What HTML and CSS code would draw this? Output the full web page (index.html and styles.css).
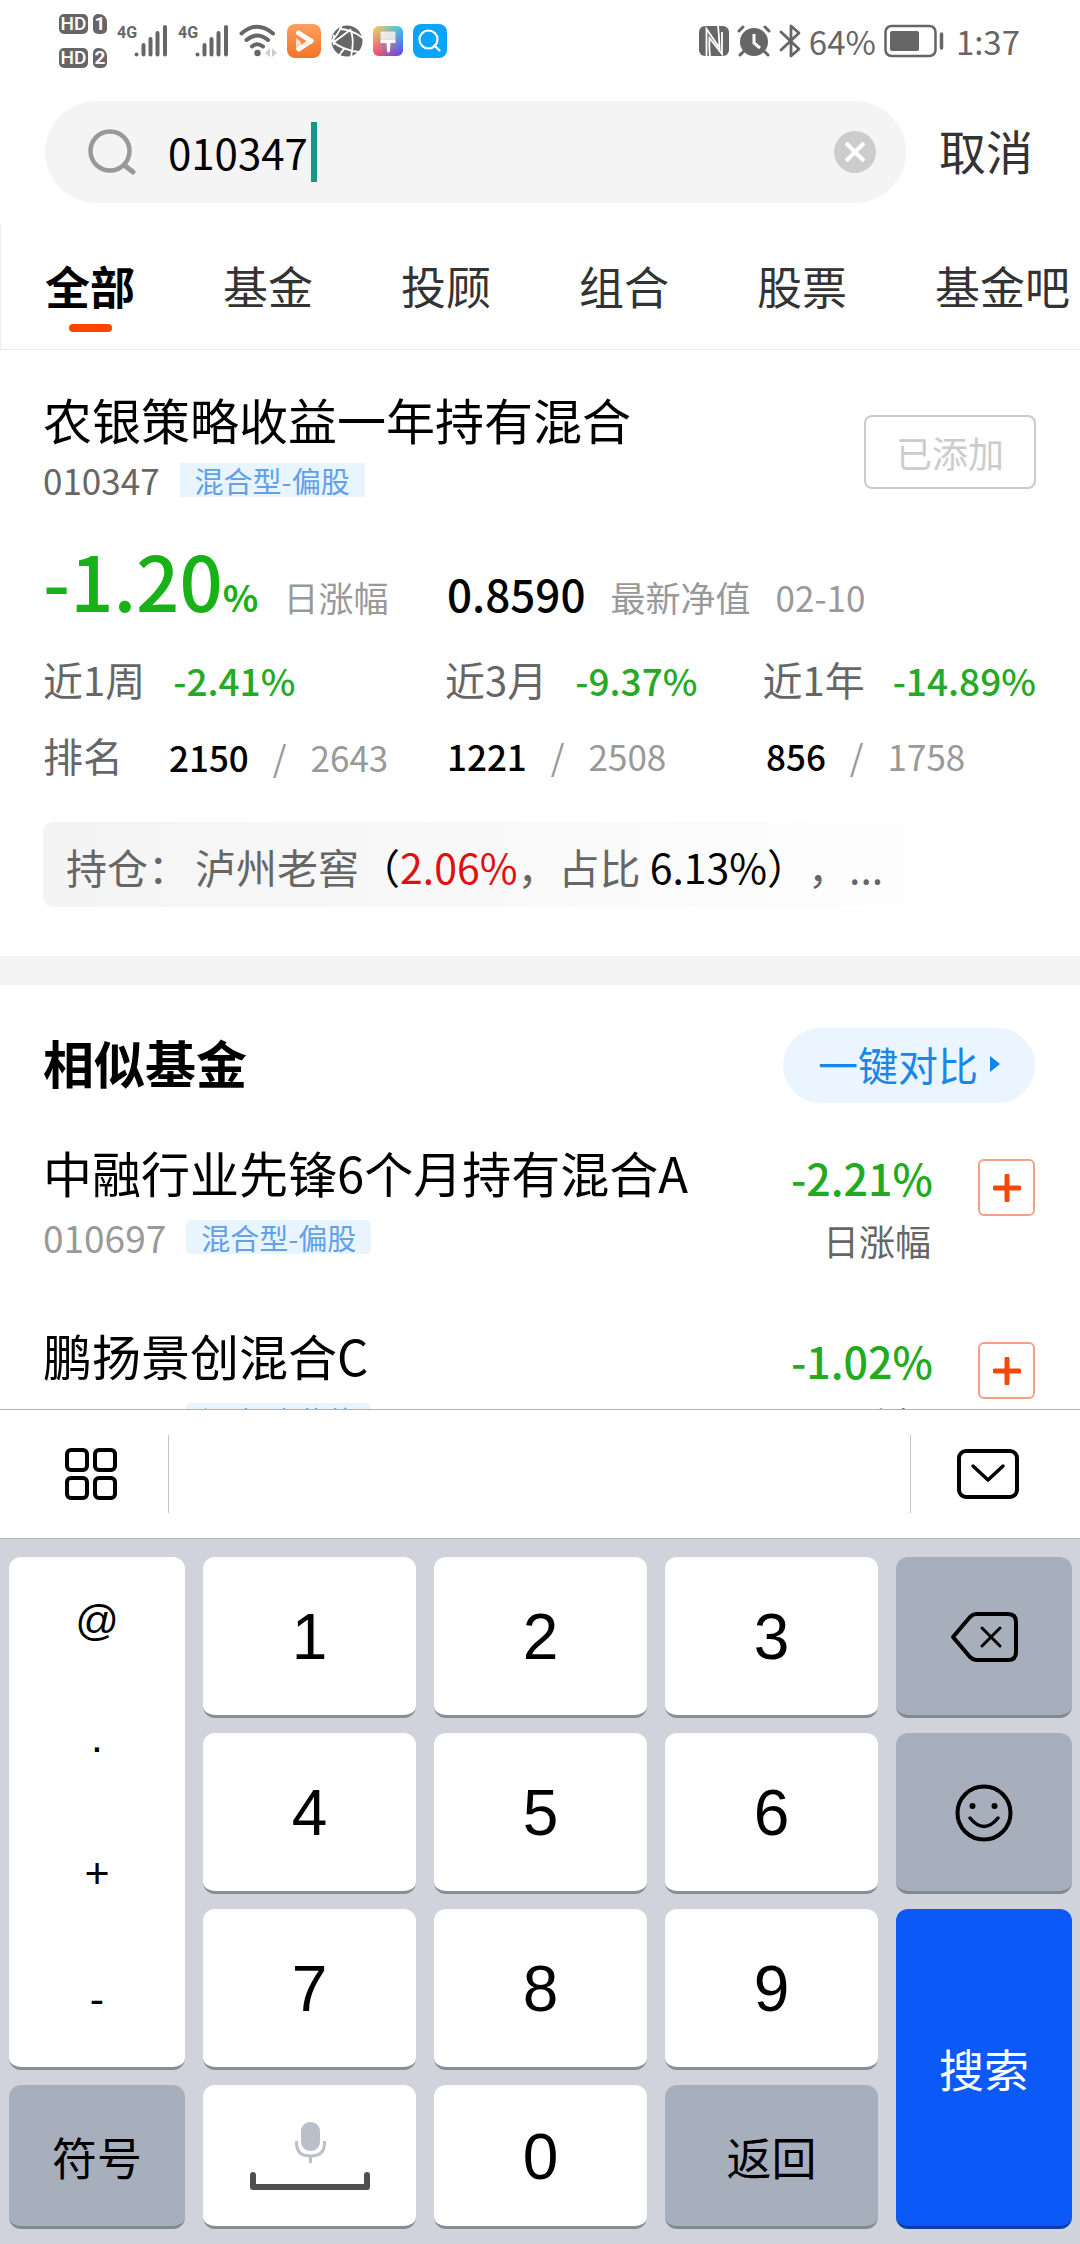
FILE: index.html
```html
<!DOCTYPE html>
<html lang="zh-CN">
<head>
<meta charset="utf-8">
<meta name="viewport" content="width=device-width, initial-scale=1">
<title>基金搜索</title>
<link rel="stylesheet" href="styles.css">
</head>
<body>
<div class="app">
  <header class="status">
    <div class="status-group">
      <div class="hd-stack">
        <span class="hd-row"><span class="hd">HD</span><span class="sim">1</span></span>
        <span class="hd-row"><span class="hd">HD</span><span class="sim">2</span></span>
      </div>
      <div class="signal">
        <span class="net">4G</span>
        <svg class="bars" viewBox="0 0 34 32" aria-hidden="true"><path d="M2.500 29.500v0M9.500 20v9.500M16.500 14v15.500M23.500 8v21.500M31 2v27.500"/></svg>
      </div>
      <div class="signal">
        <span class="net">4G</span>
        <svg class="bars" viewBox="0 0 34 32" aria-hidden="true"><path d="M2.500 29.500v0M9.500 20v9.500M16.500 14v15.500M23.500 8v21.500M31 2v27.500"/></svg>
      </div>
      <svg class="wifi" viewBox="0 0 38 34" aria-hidden="true">
        <g fill="none" stroke="#666" stroke-width="4" stroke-linecap="round"><path d="M2.500 9.500Q18 -4 34 9.500"/><path d="M7.500 16Q18 7 29 16"/><path d="M13 22.500Q18 18 24 22.500"/></g>
        <circle cx="18.500" cy="29" r="3.200" fill="#666"/><path d="M31 24v9l-5-4zM33 24v9l5-4z" fill="#ccc"/>
      </svg>
      <svg class="app-icon" viewBox="0 0 34 34" aria-hidden="true">
        <defs><linearGradient id="og" x2="0" y2="1"><stop stop-color="#fca05f"/><stop offset="1" stop-color="#f47427"/></linearGradient></defs>
        <rect width="34" height="34" rx="8" fill="url(#og)"/><path d="M11.500 9L24 17" fill="none" stroke="#fff" stroke-width="5" stroke-linecap="round"/><path d="M24 17L12 25" fill="none" stroke="#fff" stroke-width="5" stroke-linecap="round" opacity=".9"/><path d="M9 13.500v10q0 4 4 3.500l1-9z" fill="#fff" opacity=".7"/>
      </svg>
      <svg class="globe" viewBox="0 0 32 32" aria-hidden="true">
        <circle cx="16" cy="16" r="15.500" fill="#666"/><g fill="none" stroke="#fff" stroke-width="1.800"><path d="M11 0Q8 8 0 17M1 16Q11 25 28 27M8 4Q20 4 32 13M19 4Q24 14 20 32M19 5Q10 12 3 17M3 10Q2 14 3 20M14 23Q10 27 8 31"/></g>
      </svg>
      <svg class="paint" viewBox="0 0 30 30" aria-hidden="true">
        <defs><linearGradient id="pg" x2="1" y2="0"><stop stop-color="#ffd34d"/><stop offset="1" stop-color="#33c9f5"/></linearGradient><linearGradient id="ph" x2="1" y2="0"><stop stop-color="#ff4a6e"/><stop offset="1" stop-color="#5b46f2"/></linearGradient><linearGradient id="pm" x2="0" y2="1"><stop stop-color="#fff" stop-opacity="0"/><stop offset="1" stop-color="#fff"/></linearGradient><mask id="mk"><rect width="30" height="30" fill="url(#pm)"/></mask></defs>
        <rect width="30" height="30" rx="6" fill="url(#pg)"/><rect width="30" height="30" rx="6" fill="url(#ph)" mask="url(#mk)"/><path d="M7.500 5.500h15v8h-15z" fill="#fff" opacity=".75"/><path d="M7.500 13.500h15V17h-5l-.5 8q-1.500 3-3 0l-.5-8h-6z" fill="#fff"/>
      </svg>
      <svg class="app-icon" viewBox="0 0 34 34" aria-hidden="true">
        <rect width="34" height="34" rx="8" fill="#0aa5fb"/><circle cx="15.500" cy="15.500" r="9" fill="none" stroke="#fff" stroke-width="2.200"/><path d="M21.500 21.500l5 5" stroke="#fff" stroke-width="2.200" stroke-linecap="round"/>
      </svg>
    </div>
    <div class="status-group status-right">
      <svg class="nfc" viewBox="0 0 30 30" aria-hidden="true"><rect width="30" height="30" rx="6" fill="#666"/><path d="M7.500 30V3l13 19Q20 8 19 0M11 30Q10 22 10.500 12L23 28V6" fill="none" stroke="#fff" stroke-width="1.800"/></svg>
      <svg class="alarm" viewBox="0 0 34 32" aria-hidden="true"><circle cx="17" cy="17" r="14" fill="#666"/><path d="M2 6l4-4M32 6l-4-4M6 27l-3 3M28 27l3 3" stroke="#666" stroke-width="3" stroke-linecap="round"/><path d="M17 9v9l6 5" fill="none" stroke="#fff" stroke-width="3"/></svg>
      <svg class="bt" viewBox="0 0 22 34" aria-hidden="true"><path d="M2 8l18 17-8 7V2l8 7L2 26" fill="none" stroke="#666" stroke-width="2.800" stroke-linejoin="round" stroke-linecap="round"/></svg>
      <span class="battery-text">64%</span>
      <svg class="battery" viewBox="0 0 60 34" aria-hidden="true"><rect x="1.500" y="2" width="50" height="30" rx="6" fill="none" stroke="#666" stroke-width="2.500"/><rect x="6" y="7" width="29" height="20" rx="2" fill="#666"/><path d="M57.500 10v14" stroke="#666" stroke-width="3.500" stroke-linecap="round"/></svg>
      <time class="clock">1:37</time>
    </div>
  </header>

  <form class="search" onsubmit="return false">
    <div class="search-box">
      <svg class="search-icon" viewBox="0 0 50 46" aria-hidden="true"><circle cx="22" cy="22" r="19.500" fill="none" stroke="#999" stroke-width="4.500"/><path d="M36 36l9 7" stroke="#999" stroke-width="5" stroke-linecap="round"/></svg>
      <input class="search-input" type="text" aria-label="搜索基金" value="010347"><span class="caret"></span>
      <button class="clear" type="button" aria-label="清除"><svg viewBox="0 0 42 42"><circle cx="21" cy="21" r="21" fill="#ccc"/><path d="M12 12l18 18M30 12L12 30" stroke="#fff" stroke-width="4"/></svg></button>
    </div>
    <button class="cancel" type="button">取消</button>
  </form>

  <nav class="tabs">
    <a class="tab active" href="#all">全部</a>
    <a class="tab" href="#fund">基金</a>
    <a class="tab" href="#adviser">投顾</a>
    <a class="tab" href="#group">组合</a>
    <a class="tab" href="#stock">股票</a>
    <a class="tab" href="#bar">基金吧</a>
  </nav>

  <main class="content">
    <article class="fund">
      <div class="fund-head">
        <div>
          <h1 class="name">农银策略收益一年持有混合</h1>
          <div class="meta"><span class="code">010347</span><span class="tag">混合型-偏股</span></div>
        </div>
        <button class="added" type="button">已添加</button>
      </div>
      <div class="stats quote">
        <div class="pair"><span class="big">-1.20<span class="unit">%</span></span><span class="hint">日涨幅</span></div>
        <div class="pair nav-value"><span class="nav-num">0.8590</span><span class="hint">最新净值</span><span class="hint">02-10</span></div>
      </div>
      <div class="stats">
        <div class="pair"><span class="label">近1周</span><span class="down">-2.41%</span></div>
        <div class="pair"><span class="label">近3月</span><span class="down">-9.37%</span></div>
        <div class="pair"><span class="label">近1年</span><span class="down">-14.89%</span></div>
      </div>
      <div class="stats">
        <div class="rank"><span class="label rank-label">排名</span><span>2150</span><span class="of">/</span><span class="of">2643</span></div>
        <div class="rank"><span>1221</span><span class="of">/</span><span class="of">2508</span></div>
        <div class="rank"><span>856</span><span class="of">/</span><span class="of">1758</span></div>
      </div>
      <p class="holding"><span class="holding-label">持仓：</span>泸州老窖<span class="dark">（</span><span class="up">2.06%</span>，占比 <span class="dark">6.13%）</span>，...</p>
    </article>

    <section class="similar">
      <div class="similar-head">
        <h2 class="heading">相似基金</h2>
        <a class="compare" href="#compare">一键对比<svg viewBox="0 0 10 16" aria-hidden="true"><path d="M0 0l10 8-10 8z" fill="#0f86f0"/></svg></a>
      </div>
      <div class="item">
        <div class="item-main">
          <h3 class="name">中融行业先锋6个月持有混合A</h3>
          <div class="meta"><span class="code light">010697</span><span class="tag round">混合型-偏股</span></div>
        </div>
        <div class="change"><span class="pct">-2.21%</span><span class="day">日涨幅</span></div>
        <button class="add" type="button" aria-label="添加"><svg viewBox="0 0 28 28"><path d="M14 2v24M2 14h24" stroke="#f4470b" stroke-width="5" stroke-linecap="round"/></svg></button>
      </div>
      <div class="item">
        <div class="item-main">
          <h3 class="name">鹏扬景创混合C</h3>
          <div class="meta"><span class="code light">010444</span><span class="tag round">混合型-偏债</span></div>
        </div>
        <div class="change"><span class="pct">-1.02%</span><span class="day">日涨幅</span></div>
        <button class="add" type="button" aria-label="添加"><svg viewBox="0 0 28 28"><path d="M14 2v24M2 14h24" stroke="#f4470b" stroke-width="5" stroke-linecap="round"/></svg></button>
      </div>
    </section>
  </main>

  <section class="keyboard" aria-label="键盘">
    <div class="toolbar">
      <button class="tool tool-left" type="button" aria-label="菜单"><svg width="52" height="52" viewBox="0 0 52 52"><g fill="none" stroke="#000" stroke-width="4"><rect x="2" y="2" width="20" height="20" rx="4"/><rect x="30" y="2" width="20" height="20" rx="4"/><rect x="2" y="30" width="20" height="20" rx="4"/><rect x="30" y="30" width="20" height="20" rx="4"/></g></svg></button>
      <button class="tool tool-right" type="button" aria-label="收起键盘"><svg width="62" height="50" viewBox="0 0 62 50"><rect x="2" y="2" width="58" height="46" rx="7" fill="none" stroke="#000" stroke-width="4"/><path d="M16 17l15 14 15-14" fill="none" stroke="#000" stroke-width="3.500" stroke-linecap="round" stroke-linejoin="round"/></svg></button>
    </div>
    <div class="keys">
      <div class="key symbols"><button type="button">@</button><button type="button">·</button><button type="button">+</button><button type="button">-</button></div>
      <button class="key" type="button">1</button>
      <button class="key" type="button">2</button>
      <button class="key" type="button">3</button>
      <button class="key gray" type="button" aria-label="删除"><svg width="68" height="50" viewBox="0 0 68 50"><path d="M3 25L20 5q3-3 6-3h32q8 0 8 8v30q0 8-8 8H26q-3 0-6-3z" fill="none" stroke="#000" stroke-width="4" stroke-linejoin="round"/><path d="M32 16l18 18M50 16L32 34" stroke="#000" stroke-width="3" stroke-linecap="round"/></svg></button>
      <button class="key" type="button">4</button>
      <button class="key" type="button">5</button>
      <button class="key" type="button">6</button>
      <button class="key gray" type="button" aria-label="表情"><svg width="58" height="58" viewBox="0 0 58 58"><circle cx="29" cy="29" r="26.500" fill="none" stroke="#000" stroke-width="4"/><circle cx="17.500" cy="22" r="3" /><circle cx="39.500" cy="22" r="3"/><path d="M15 34q14 17 28 0" fill="none" stroke="#000" stroke-width="3.500" stroke-linecap="round"/></svg></button>
      <button class="key" type="button">7</button>
      <button class="key" type="button">8</button>
      <button class="key" type="button">9</button>
      <button class="key go" type="button">搜索</button>
      <button class="key gray word" type="button">符号</button>
      <button class="key" type="button" aria-label="空格"><svg width="120" height="70" viewBox="0 0 120 70"><rect x="51" y="0" width="19" height="29" rx="9" fill="#bac0c9"/><path d="M46.500 19v2q0 13 14 13t14-13v-2M60.500 34v7" fill="none" stroke="#bac0c9" stroke-width="3"/><path d="M3 53v12h114V53" fill="none" stroke="#505050" stroke-width="6" stroke-linecap="round" stroke-linejoin="round"/></svg></button>
      <button class="key" type="button">0</button>
      <button class="key gray word" type="button">返回</button>
    </div>
  </section>
</div>
</body>
</html>
```

FILE: styles.css
```css
* { box-sizing: border-box; }

body {
  margin: 0;
  background: #fff;
  color: #000;
  font-family: "Noto Sans CJK SC", sans-serif;
}

button, input {
  padding: 0;
  border: 0;
  background: none;
  color: inherit;
  font: inherit;
}

a { color: inherit; text-decoration: none; }
h1, h2, h3, p { margin: 0; font-weight: 400; }
svg { display: block; flex: none; }

.app {
  display: flex;
  flex-direction: column;
  height: 100vh;
}

/* Status bar */
.status {
  display: flex;
  flex: none;
  justify-content: space-between;
  height: 82px;
  padding: 0 60px 0 59px;
  color: #666;
}
.status-group { display: flex; align-items: center; gap: 10px; }
.status-right { gap: 8px; }
.hd-stack { display: flex; flex-direction: column; gap: 14px; }
.hd-row { display: flex; gap: 5px; }
.hd, .sim {
  height: 20px;
  border-radius: 5px;
  background: #666;
  color: #fff;
  font: 500 19px/20px "Roboto", sans-serif;
  text-align: center;
}
.hd { width: 29px; }
.sim { width: 14px; border-top-right-radius: 8px; font-weight: 700; }
.signal { display: flex; align-items: flex-start; }
.net { width: 17px; font: 700 16px/16px "Roboto", sans-serif; }
.bars { width: 34px; height: 32px; fill: none; stroke: #666; stroke-width: 4; stroke-linecap: round; }
.wifi { width: 38px; height: 34px; }
.app-icon { width: 34px; height: 34px; }
.globe { width: 32px; height: 32px; }
.paint { width: 30px; height: 30px; }
.nfc { width: 30px; height: 30px; }
.alarm { width: 34px; height: 32px; }
.bt { width: 22px; height: 34px; }
.battery { width: 60px; height: 34px; }
.battery-text, .clock { font-size: 33px; line-height: 48px; }
.clock { padding-left: 4px; }

/* Search */
.search {
  display: flex;
  flex: none;
  align-items: center;
  gap: 33px;
  padding: 19px 47px 21px 45px;
}
.search-box {
  display: flex;
  flex: 1;
  align-items: center;
  height: 102px;
  padding: 0 30px 0 43px;
  border-radius: 51px;
  background: #f4f4f4;
}
.search-icon { width: 50px; height: 46px; margin-right: 30px; }
.search-input { width: 143px; height: 60px; outline: 0; font-size: 42px; line-height: 60px; }
.caret { width: 6px; height: 60px; background: #149688; }
.clear { width: 42px; height: 42px; margin-left: auto; }
.cancel { padding-bottom: 4px; color: #333; font-size: 47px; line-height: 68px; }

/* Tabs */
.tabs {
  display: flex;
  flex: none;
  gap: 88px;
  height: 126px;
  padding: 30px 0 0 44px;
  overflow: hidden;
  border-bottom: 1px solid #eaeaea;
  border-left: 1px solid #eee;
}
.tab {
  display: flex;
  flex: none;
  flex-direction: column;
  align-items: center;
  gap: 6px;
  color: #333;
  font-size: 45px;
  line-height: 64px;
}
.active { color: #000; font-weight: 700; }
.active::after {
  width: 43px;
  height: 8px;
  border-radius: 4px;
  background: #ff4400;
  content: "";
}

.content { flex: 1; min-height: 0; overflow: hidden; }

/* Matched fund */
.fund {
  padding: 35px 44px 49px 43px;
  border-bottom: 29px solid #f4f4f4;
}
.fund-head { display: flex; align-items: flex-end; justify-content: space-between; }
.name { font-size: 49px; line-height: 68px; }
.meta { display: flex; align-items: center; gap: 20px; height: 54px; }
.code { color: #666; font-size: 35px; line-height: 50px; }
.light { color: #999; font-size: 37px; }
.tag {
  padding: 0 15px;
  background: #e8f4fe;
  color: #62a0e8;
  font-size: 29px;
  line-height: 34px;
}
.round { border-radius: 5px; }
.added {
  width: 172px;
  height: 74px;
  margin-bottom: 18px;
  border: 2px solid #ccc;
  border-radius: 8px;
  color: #ccc;
  font-size: 36px;
  line-height: 60px;
}
.stats {
  display: grid;
  grid-template-columns: 404fr 319fr 270fr;
  height: 76px;
  align-items: center;
}
.quote { height: 134px; padding-top: 22px; align-items: baseline; }
.pair { display: flex; align-items: baseline; gap: 28px; white-space: nowrap; }
.quote .pair { gap: 25px; }
.nav-value { grid-column: span 2; }
.big { color: #18b218; font-size: 76px; font-weight: 500; line-height: 100px; }
.unit { font-size: 37px; font-weight: 700; }
.hint { color: #999; font-size: 35px; }
.nav-num { font-size: 44px; font-weight: 500; }
.label { color: #666; font-size: 40px; }
.down { color: #26aa26; font-size: 37px; font-weight: 500; }
.rank { display: flex; align-items: baseline; gap: 24px; font-size: 35px; font-weight: 500; white-space: nowrap; }
.rank-label { width: 102px; font-weight: 400; }
.of { color: #999; font-weight: 400; }
.holding {
  height: 85px;
  margin-top: 29px;
  padding-left: 23px;
  border-radius: 10px;
  background: linear-gradient(90deg, #f4f4f4, #fff);
  color: #666;
  font-size: 41px;
  line-height: 88px;
  text-spacing-trim: space-all;
  white-space: nowrap;
}
.holding-label { margin-right: 6px; }
.dark { color: #000; }
.up { color: #e01010; }

/* Similar funds */
.similar { padding: 42px 45px 0 43px; }
.similar-head { display: flex; align-items: center; justify-content: space-between; height: 76px; }
.heading { padding-bottom: 6px; font-size: 51px; font-weight: 700; }
.compare {
  display: flex;
  align-items: center;
  justify-content: center;
  gap: 12px;
  width: 252px;
  height: 75px;
  padding-bottom: 3px;
  border-radius: 38px;
  background: #ebf5ff;
  color: #1a86e8;
  font-size: 40px;
}
.compare svg { width: 10px; height: 16px; }
.item { display: flex; height: 183px; padding-top: 33px; }
.item .name { line-height: 72px; }
.item .meta { height: 58px; }
.item-main { flex: 1; }
.change { display: flex; flex-direction: column; align-items: flex-end; padding-top: 9px; }
.pct { color: #22ab22; font-size: 43px; font-weight: 500; line-height: 64px; }
.day { padding-right: 2px; color: #666; font-size: 36px; line-height: 62px; }
.add {
  display: flex;
  align-items: center;
  justify-content: center;
  width: 57px;
  height: 57px;
  margin: 23px 0 0 45px;
  border: 2px solid #f3a184;
  border-radius: 6px;
}
.add svg { width: 28px; height: 28px; }

/* Keyboard */
.keyboard { flex: none; background: #d0d3dc; }
.toolbar {
  display: flex;
  align-items: center;
  justify-content: space-between;
  height: 130px;
  border-top: 1px solid #b0b0b0;
  border-bottom: 1px solid #b8bac0;
  background: #fff;
}
.tool { display: flex; align-items: center; height: 78px; }
.tool-left { padding: 0 51px 0 65px; border-right: 1px solid #c4c4c4; }
.tool-right { padding: 0 61px 0 46px; border-left: 1px solid #c4c4c4; }
.keys {
  display: grid;
  grid-template: repeat(3, 161px) 144px / 176fr 213fr 213fr 213fr 176fr;
  gap: 15px 18px;
  padding: 18px 8px 15px 9px;
}
.key {
  display: flex;
  align-items: center;
  justify-content: center;
  padding-top: 2px;
  border-bottom: 3px solid #8a8c93;
  border-radius: 12px;
  background: #fff;
  font-family: "Liberation Sans", "Noto Sans CJK SC", sans-serif;
  font-size: 64px;
}
.symbols {
  grid-row: span 3;
  flex-direction: column;
  align-items: stretch;
  padding: 0 0 4px;
  font-size: 43px;
}
.symbols button { flex: 1; }
.gray { border-color: #828993; background: #a8afbc; }
.word { font-size: 45px; }
.go {
  grid-area: 3 / 5 / span 2;
  border-color: #0a3fa8;
  background: #0b59f7;
  color: #fff;
  font-size: 45px;
}
```
